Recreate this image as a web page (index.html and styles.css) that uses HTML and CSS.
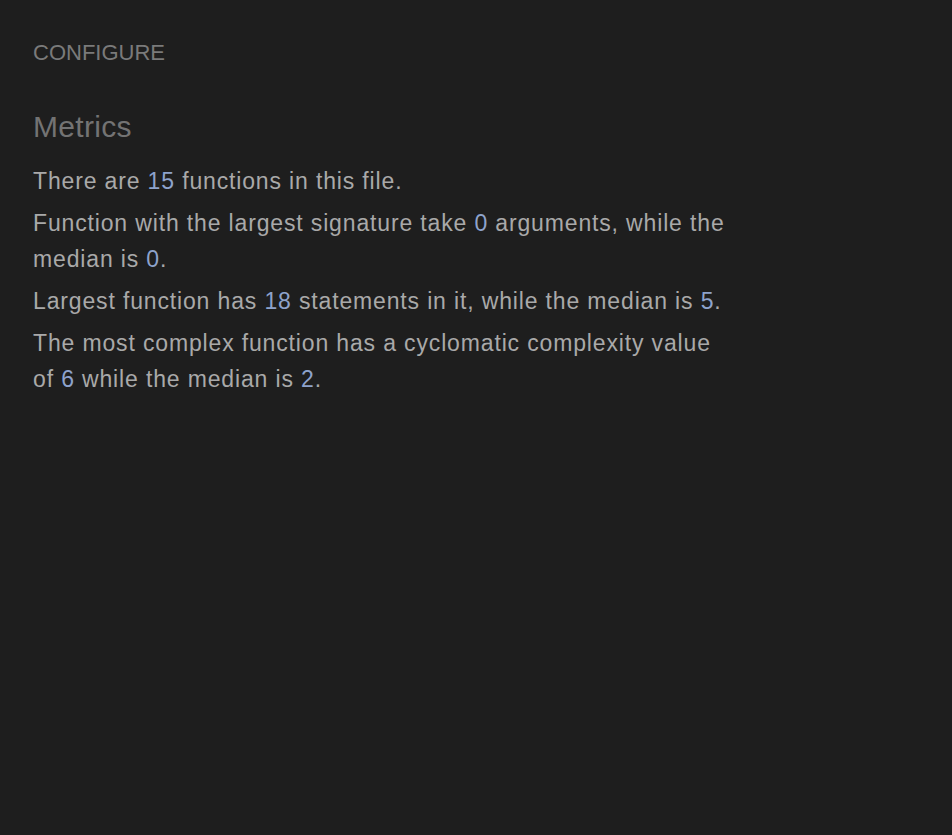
FILE: index.html
```html
<!DOCTYPE html>
<html>
<head>
<meta charset="utf-8">
<link rel="stylesheet" href="styles.css">
</head>
<body>
<main class="panel">
  <div class="section-title">CONFIGURE</div>
  <h2 class="heading">Metrics</h2>
  <p class="line">There are <span class="num">15</span> functions in this file.</p>
  <p class="line">Function with the largest signature take <span class="num">0</span> arguments, while the median is <span class="num">0</span>.</p>
  <p class="line">Largest function has <span class="num">18</span> statements in it, while the median is <span class="num">5</span>.</p>
  <p class="line">The most complex function has a cyclomatic complexity value of <span class="num">6</span> while the median is <span class="num">2</span>.</p>
</main>
</body>
</html>
```
FILE: styles.css
```css
html, body {
  margin: 0;
  padding: 0;
  background: #1e1e1e;
  height: 100%;
}
body {
  font-family: "Liberation Sans", Arial, sans-serif;
  color: #a9a9a9;
}
.panel {
  padding: 37px 33px;
  width: 705px;
}
.section-title {
  font-size: 22px;
  line-height: 32px;
  color: #7a7a7a;
  margin: 0;
}
.heading {
  font-size: 30px;
  font-weight: normal;
  line-height: 40px;
  color: #737373;
  margin: 38px 0 16px;
  letter-spacing: 0.3px;
}
.line {
  font-size: 23px;
  line-height: 36px;
  letter-spacing: 0.85px;
  margin: 0 0 6px;
}
.num {
  color: #8ea3cc;
}
```
